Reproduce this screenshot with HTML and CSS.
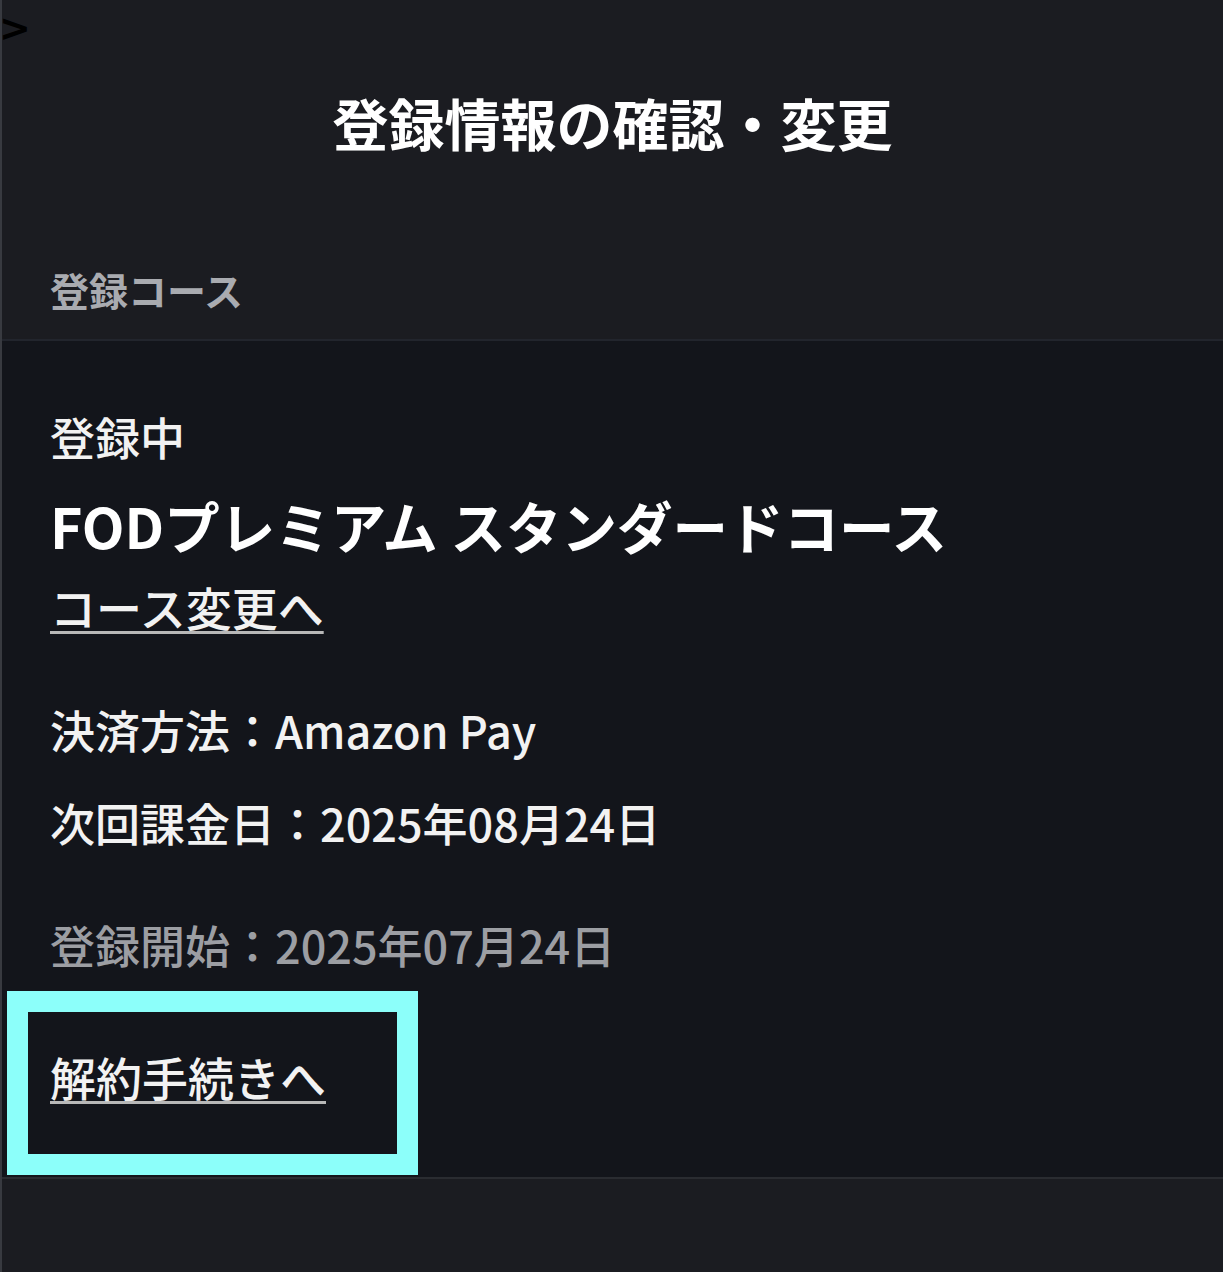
FILE: index.html
```html
<!DOCTYPE html>
<html lang="ja">
<head>
<meta charset="utf-8">
<title>登録情報の確認・変更</title>
<link rel="stylesheet" href="styles.css">
</head>
<body>
<div class="page">
  <span class="stray">&gt;</span>
  <header class="header">
    <h1 class="title">登録情報の確認・変更</h1>
    <h2 class="section-label">登録コース</h2>
  </header>
  <section class="card">
    <p class="status">登録中</p>
    <p class="course">FODプレミアム スタンダードコース</p>
    <p class="link-row"><a class="link" href="#">コース変更へ</a></p>
    <p class="info pay">決済方法：Amazon Pay</p>
    <p class="info next">次回課金日：2025年08月24日</p>
    <p class="info start">登録開始：2025年07月24日</p>
    <div class="cancel-row">
      <a class="link" href="#">解約手続きへ</a>
      <span class="highlight"></span>
    </div>
  </section>
  <div class="footer"></div>
</div>
</body>
</html>
```
FILE: styles.css
```css
* { box-sizing: border-box; }
html, body { margin: 0; padding: 0; }
body {
  background: #1b1c21;
  font-family: "Noto Sans CJK JP", "Noto Sans", sans-serif;
  color: #f2f2f2;
}
.page {
  position: relative;
  border-left: 2px solid #383a40;
  min-height: 1272px;
  background: #1b1c21;
}
.stray {
  position: absolute;
  top: 9px;
  left: -3px;
  font-family: "DejaVu Sans", sans-serif;
  font-size: 38px;
  font-weight: 700;
  line-height: 1;
  color: #000;
}
.header {
  padding-top: 83px;
  padding-bottom: 23px;
}
.title {
  margin: 0;
  font-size: 56px;
  line-height: 77px;
  font-weight: 700;
  text-align: center;
  color: #ffffff;
}
.section-label {
  margin: 103px 0 0 48px;
  font-size: 39px;
  line-height: 53px;
  font-weight: 700;
  color: #a9abb0;
}
.card {
  background: #13151b;
  border-top: 2px solid #22252d;
  border-bottom: 2px solid #2a2c31;
  padding: 64px 0 69px 48px;
}
.card p { margin: 0; }
.status {
  font-size: 45px;
  line-height: 63px;
  font-weight: 500;
}
.course {
  margin-top: 19px !important;
  font-size: 55.5px;
  line-height: 77px;
  font-weight: 700;
  color: #ffffff;
}
.link-row {
  margin-top: 11px !important;
  font-size: 46px;
  line-height: 63px;
}
.link {
  color: #f2f2f2;
  font-weight: 500;
  text-decoration: underline;
  text-decoration-color: #b8b8b8;
  text-decoration-thickness: 3px;
  text-underline-offset: 5px;
}
.info {
  font-size: 45px;
  line-height: 63px;
  font-weight: 500;
}
.pay { margin-top: 60px !important; }
.next { margin-top: 30px !important; }
.start { margin-top: 59px !important; color: #9c9ea3; }
.cancel-row {
  position: relative;
  margin-top: 69px;
  font-size: 46px;
  line-height: 63px;
}
.highlight {
  position: absolute;
  top: -54px;
  left: -43px;
  width: 411px;
  height: 184px;
  border: 21px solid #8cfffa;
  pointer-events: none;
}
.footer {
  height: 92px;
}
```
